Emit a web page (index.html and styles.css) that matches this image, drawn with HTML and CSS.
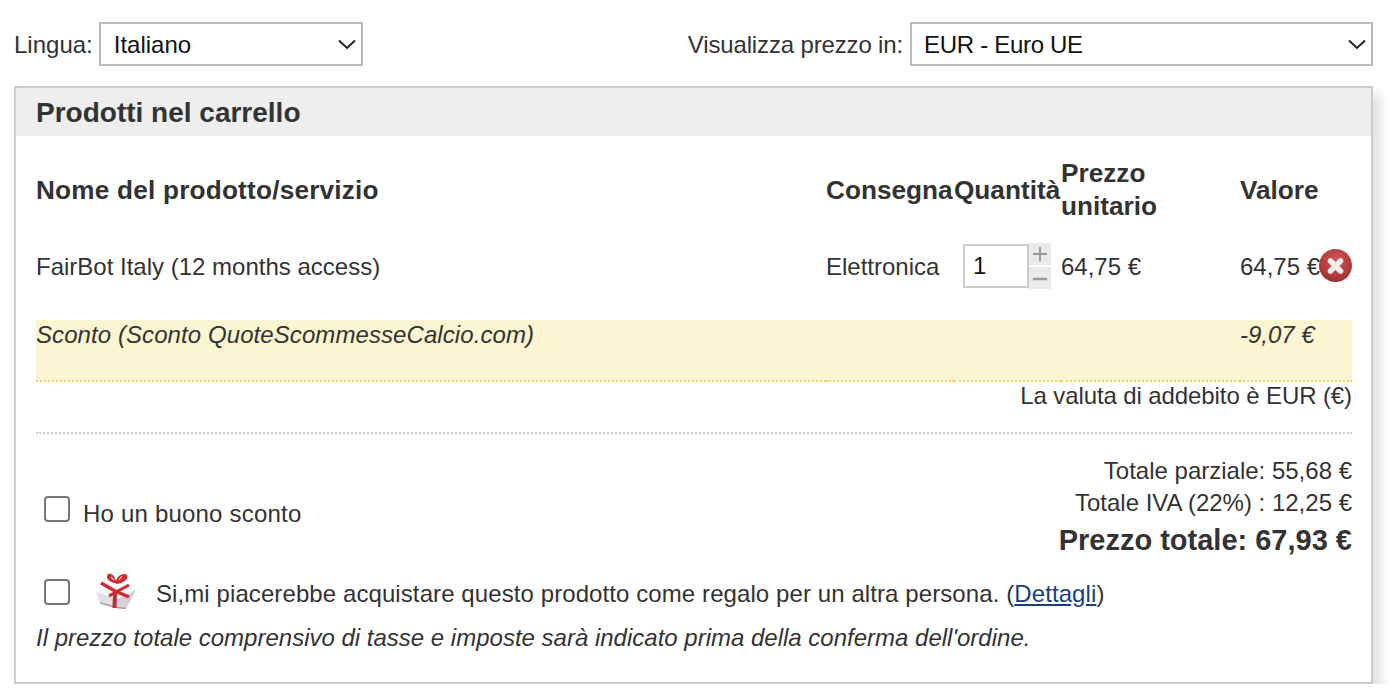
FILE: index.html
```html
<!DOCTYPE html>
<html>
  <head>
    <title>Carrello</title>
    <link rel="stylesheet" href="styles.css">
  </head>
  <body>
    <div class="topbar">
      <div class="field">
        <label class="field-label">Lingua:</label>
        <div class="select-wrap lang-select">
          <select class="select"><option>Italiano</option></select>
          <svg class="chevron" width="18" height="11" viewBox="0 0 18 11"><path d="M1 1.5 L9 9 L17 1.5" fill="none" stroke="#222" stroke-width="2"/></svg>
        </div>
      </div>
      <div class="field">
        <label class="field-label price-label">Visualizza prezzo in:</label>
        <div class="select-wrap currency-select">
          <select class="select"><option>EUR - Euro UE</option></select>
          <svg class="chevron" width="18" height="11" viewBox="0 0 18 11"><path d="M1 1.5 L9 9 L17 1.5" fill="none" stroke="#222" stroke-width="2"/></svg>
        </div>
      </div>
    </div>

    <div class="cart">
      <h2 class="cart-title">Prodotti nel carrello</h2>
      <div class="cart-body">
        <table class="items">
          <colgroup>
            <col class="col-name">
            <col class="col-delivery">
            <col class="col-qty">
            <col class="col-price">
            <col class="col-value">
          </colgroup>
          <tr class="head-row">
            <th class="name-head">Nome del prodotto/servizio</th>
            <th>Consegna</th>
            <th>Quantità</th>
            <th>Prezzo unitario</th>
            <th>Valore</th>
          </tr>
          <tr class="item-row">
            <td>FairBot Italy (12 months access)</td>
            <td>Elettronica</td>
            <td>
              <div class="qty">
                <input class="qty-input" type="text" value="1">
                <div class="spinner">
                  <svg class="spin-btn" width="22" height="22" viewBox="0 0 22 22"><path d="M4 11 H18 M11 4 V18" stroke="#9a9a9a" stroke-width="2"/></svg>
                  <svg class="spin-btn" width="22" height="22" viewBox="0 0 22 22"><path d="M4 12 H18" stroke="#9a9a9a" stroke-width="2.5"/></svg>
                </div>
              </div>
            </td>
            <td>64,75 €</td>
            <td>
              <div class="value-cell">
                <span>64,75 €</span>
                <svg class="remove" width="33" height="33" viewBox="0 0 33 33">
                  <defs>
                    <radialGradient id="removeFill" cx="50%" cy="35%" r="65%">
                      <stop offset="0%" stop-color="#cf5a55"/>
                      <stop offset="70%" stop-color="#b53a3a"/>
                      <stop offset="100%" stop-color="#97302f"/>
                    </radialGradient>
                  </defs>
                  <circle cx="16.5" cy="16.5" r="16.5" fill="url(#removeFill)"/>
                  <path d="M11.5 12 L21.5 22 M21.5 12 L11.5 22" stroke="#f6ecea" stroke-width="5.5" stroke-linecap="round"/>
                </svg>
              </div>
            </td>
          </tr>
          <tr class="spacer-row"><td colspan="5"></td></tr>
          <tr class="discount-row">
            <td class="discount-name" colspan="4">Sconto (Sconto QuoteScommesseCalcio.com)</td>
            <td>-9,07 €</td>
          </tr>
        </table>

        <div class="currency-note">La valuta di addebito è EUR (€)</div>

        <div class="summary">
          <label class="check-label voucher">
            <input class="check" type="checkbox">
            <span class="voucher-text">Ho un buono sconto</span>
          </label>
          <div class="totals">
            <div class="total-line">Totale parziale: 55,68 €</div>
            <div class="total-line">Totale IVA (22%) : 12,25 €</div>
            <div class="grand-total">Prezzo totale: 67,93 €</div>
          </div>
        </div>

        <div class="gift-row">
          <input class="check" type="checkbox">
          <svg class="gift" width="42" height="38" viewBox="0 0 42 38">
            <defs><filter id="soft"><feGaussianBlur stdDeviation="0.7"/></filter></defs>
            <g filter="url(#soft)">
              <path d="M1 20 L18 10 L41 18 L22 27 Z" fill="#f7f7f8"/>
              <path d="M1 20 L22 27 L22 36 L5 31 Z" fill="#dfdfe4"/>
              <path d="M22 27 L41 18 L36 28 L31 36.5 L22 36 Z" fill="#d2d3db"/>
              <path d="M5 31 L22 35.5 L31 36.5" fill="none" stroke="#c58ea6" stroke-width="1.3"/>
              <path d="M6 11 L20 19 L34 25" fill="none" stroke="#cf2b33" stroke-width="3.5"/>
              <path d="M34 13 L21 20 L14 24" fill="none" stroke="#cf2b33" stroke-width="3"/>
              <path d="M20 21 L19.5 36" fill="none" stroke="#c42c3a" stroke-width="4"/>
              <path d="M20 11 C14 10 10 6 13 2 C18 1 20 6 21 9 C22 5 27 0 32 3 C34 8 27 11 22 12 Z" fill="#cf2b33"/>
              <path d="M16 5 L19 8 M27 4 L24 8" fill="none" stroke="#f3c4c4" stroke-width="1.2"/>
            </g>
          </svg>
          <span class="gift-text">Si,mi piacerebbe acquistare questo prodotto come regalo per un altra persona. (<a class="details-link" href="#">Dettagli</a>)</span>
        </div>

        <p class="tax-note">Il prezzo totale comprensivo di tasse e imposte sarà indicato prima della conferma dell'ordine.</p>
      </div>
    </div>
  </body>
</html>
```

FILE: styles.css
```css
body {
  margin: 0;
  font-family: "Liberation Sans", Arial, sans-serif;
  font-size: 24px;
  color: #333;
  background: #fff;
}

.topbar {
  display: flex;
  justify-content: space-between;
  align-items: center;
  margin: 22px 27px 20px 14px;
}

.field {
  display: flex;
  align-items: center;
  gap: 7px;
}

.field-label {
  padding-top: 2px;
}

.price-label {
  letter-spacing: -0.15px;
}

.select-wrap {
  position: relative;
}

.lang-select {
  width: 264px;
  margin-left: -1px;
}

.lang-select .select {
  padding-left: 13px;
}

.currency-select {
  width: 463px;
}

.currency-select .select {
  letter-spacing: -0.3px;
}

.select {
  display: block;
  width: 100%;
  height: 44px;
  padding: 0 12px;
  border: 2px solid #bbb;
  border-radius: 0;
  background: #fff;
  color: #111;
  font: inherit;
  appearance: none;
}

.chevron {
  position: absolute;
  top: 17px;
  right: 7px;
  pointer-events: none;
}

.cart {
  width: 1359px;
  height: 598px;
  margin-left: 14px;
  box-sizing: border-box;
  border: 2px solid #ccc;
  box-shadow: 8px 8px 10px rgba(0, 0, 0, 0.12);
}

.cart-title {
  margin: 0;
  height: 48px;
  padding-left: 20px;
  background: #eee;
  font-size: 28px;
  line-height: 50px;
}

.cart-body {
  padding: 20px 19px 0 20px;
}

.items {
  width: 1316px;
  table-layout: fixed;
  border-collapse: collapse;
}

.col-name { width: 790px; }
.col-delivery { width: 128px; }
.col-qty { width: 107px; }
.col-price { width: 179px; }
.col-value { width: 112px; }

.items th,
.items td {
  padding: 0;
  text-align: left;
}

.items .head-row th {
  height: 66px;
  padding: 1px 0;
  font-size: 26.2px;
  line-height: 33px;
}

.head-row .name-head {
  letter-spacing: 0.2px;
}

.item-row td {
  height: 86px;
}

.qty {
  display: flex;
  margin: -2px 0 0 9px;
}

.qty-input {
  width: 66px;
  height: 44px;
  box-sizing: border-box;
  padding: 0 8px;
  border: 2px solid #ccc;
  color: #111;
  font: inherit;
}

.spinner {
  display: flex;
  flex-direction: column;
  gap: 2px;
  height: 46px;
  margin-top: -1px;
}

.spin-btn {
  display: block;
  background: #eaeaea;
}

.value-cell {
  position: relative;
}

.remove {
  position: absolute;
  top: -4px;
  right: 0;
}

.spacer-row td {
  height: 10px;
}

.items .discount-row td {
  height: 58px;
  vertical-align: top;
  padding-top: 2px;
  background: #fcf5d2;
  border-bottom: 2px dotted #f5d25e;
  font-style: italic;
  line-height: 26px;
}

.items .discount-name {
  letter-spacing: 0.08px;
}

.currency-note {
  padding: 1px 0 23px;
  border-bottom: 2px dotted #ccc;
  text-align: right;
  letter-spacing: -0.1px;
  line-height: 26px;
}

.summary {
  display: flex;
  justify-content: space-between;
  align-items: center;
  margin-top: 21px;
}

.check-label {
  display: flex;
  align-items: center;
}

.voucher {
  margin-top: 4px;
}

.voucher-text {
  margin-top: 10px;
  letter-spacing: 0.2px;
}

.check {
  width: 26px;
  height: 26px;
  margin: 0 0 0 8px;
  box-sizing: border-box;
  border: 2px solid #767676;
  border-radius: 4px;
  background: #fff;
  appearance: none;
  flex-shrink: 0;
}

.voucher .check {
  margin-right: 13px;
}

.totals {
  text-align: right;
}

.total-line {
  height: 32px;
  line-height: 32px;
}

.grand-total {
  margin-top: 3px;
  font-size: 29px;
  font-weight: bold;
  line-height: 36px;
}

.gift-row {
  display: flex;
  align-items: center;
  margin-top: 14px;
  height: 44px;
}

.gift-row .check {
  margin-top: -4px;
}

.gift {
  margin: -6px 19px 0 25px;
}

.gift-text {
  letter-spacing: 0.09px;
}

.details-link {
  color: #1a3f80;
}

.tax-note {
  margin: 5px 0 0;
  font-style: italic;
  line-height: 34px;
}
```
